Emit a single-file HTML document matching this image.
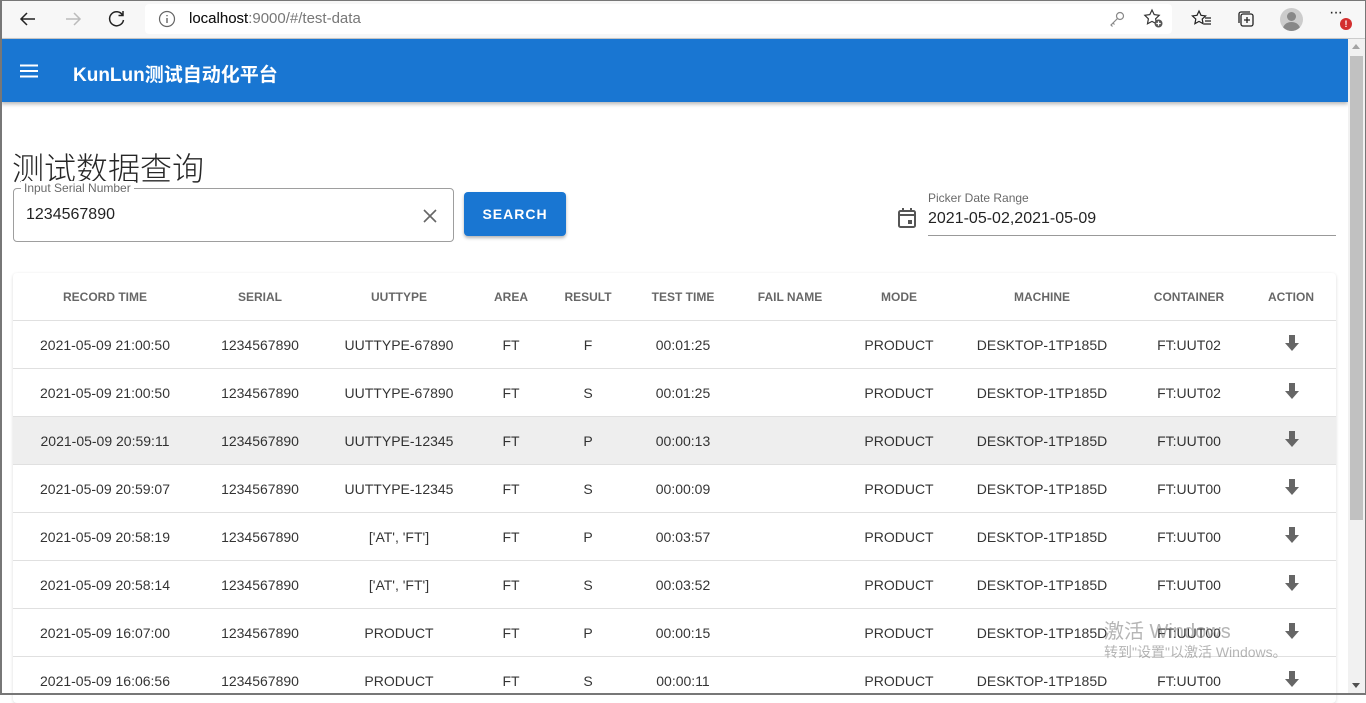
<!DOCTYPE html>
<html><head><meta charset="utf-8"><style>
*{margin:0;padding:0;box-sizing:border-box}
body{width:1366px;height:695px;overflow:hidden;background:#fff;font-family:"Liberation Sans","Noto Sans CJK SC",sans-serif;position:relative;color:rgba(0,0,0,.87)}
.abs{position:absolute}
#tb{left:0;top:0;width:1366px;height:39px;background:#f7f7f7;border-top:1px solid #777;border-left:1px solid #777;border-right:1px solid #777;border-bottom:1px solid #ccc}
#addr{left:145px;top:4px;width:1027px;height:30px;background:#fff;border-radius:4px}
#app{left:1px;top:39px;width:1347px;height:63px;background:#1976d2;box-shadow:0 2px 4px rgba(0,0,0,.3)}
.lb{left:0;top:0;width:2px;height:695px;background:#777}
.rb{left:1365px;top:0;width:1px;height:695px;background:#777}
.bb{left:0;top:693px;width:1366px;height:2px;background:#777}
#sb{left:1348px;top:39px;width:17px;height:654px;background:#f1f1f1}
#th{left:1350px;top:56px;width:13px;height:464px;background:#c1c1c1}
.hd{position:absolute;top:274px;height:47px;line-height:47px;font-size:12px;font-weight:bold;color:rgba(0,0,0,.6);transform:translateX(-50%);white-space:nowrap}
.c{position:absolute;font-size:14px;color:rgba(0,0,0,.8);transform:translateX(-50%);white-space:nowrap}
.rl{position:absolute;left:13px;width:1323px;height:1px;background:#e0e0e0}
.ar{position:absolute;width:16px;height:17px}
</style></head><body>
<div class="abs" id="tb"></div>
<div class="abs" id="addr"></div>
<svg class="abs" style="left:18px;top:9px" width="20" height="20" viewBox="0 0 20 20"><path d="M17 10H3M9 4L3 10l6 6" stroke="#222" stroke-width="1.5" fill="none"/></svg>
<svg class="abs" style="left:63px;top:9px" width="20" height="20" viewBox="0 0 20 20"><path d="M3 10h14M11 4l6 6-6 6" stroke="#bbb" stroke-width="1.5" fill="none"/></svg>
<svg class="abs" style="left:107px;top:8px" width="20" height="20" viewBox="0 0 20 20"><path d="M15.5 7A7 7 0 1 0 16.5 12M16 3v4.5h-4.5" stroke="#222" stroke-width="1.5" fill="none"/></svg>
<svg class="abs" style="left:158px;top:10px" width="18" height="18" viewBox="0 0 18 18"><circle cx="9" cy="9" r="7.5" stroke="#666" stroke-width="1.2" fill="none"/><path d="M9 8v5M9 5v1.3" stroke="#666" stroke-width="1.4"/></svg>
<div class="abs" style="left:189px;top:10px;font-size:15px;color:#777">localhost<span>:9000/#/test-data</span></div>
<div class="abs" style="left:189px;top:10px;font-size:15px;color:#111">localhost</div>
<svg class="abs" style="left:1108px;top:10px" width="18" height="18" viewBox="0 0 18 18"><circle cx="12" cy="6" r="3.5" stroke="#888" fill="none" stroke-width="1.2"/><path d="M9.5 8.5L3 15l1.5 1.5M5 13l1.5 1.5" stroke="#888" stroke-width="1.2" fill="none"/></svg>
<svg class="abs" style="left:1143px;top:8px" width="22" height="22" viewBox="0 0 22 22"><path d="M9 2l2.2 4.6 5 .7-3.6 3.5.9 5L9 13.4 4.5 15.8l.9-5L1.8 7.3l5-.7z" stroke="#333" fill="none" stroke-width="1.2"/><circle cx="15.5" cy="15.5" r="4" fill="#555"/><path d="M15.5 13.3v4.4M13.3 15.5h4.4" stroke="#fff" stroke-width="1.2"/></svg>
<svg class="abs" style="left:1191px;top:9px" width="22" height="20" viewBox="0 0 22 20"><path d="M8 2l2 4.3 4.6.6-3.4 3.2.9 4.6L8 12.4 3.9 14.7l.9-4.6L1.4 6.9 6 6.3z" stroke="#222" fill="none" stroke-width="1.2"/><path d="M14 9h6M14 12h6M13 15h7" stroke="#222" stroke-width="1.2"/></svg>
<svg class="abs" style="left:1236px;top:9px" width="22" height="22" viewBox="0 0 22 22"><rect x="5" y="5" width="12" height="12" rx="2" stroke="#222" fill="none" stroke-width="1.3"/><path d="M3 14V5a2 2 0 0 1 2-2h9M11 8v6M8 11h6" stroke="#222" stroke-width="1.3" fill="none"/></svg>
<div class="abs" style="left:1280px;top:8px;width:23px;height:23px;border-radius:50%;background:#ccc;overflow:hidden"><div class="abs" style="left:7px;top:4px;width:9px;height:9px;border-radius:50%;background:#888"></div><div class="abs" style="left:3px;top:14px;width:17px;height:14px;border-radius:50%;background:#888"></div></div>
<div class="abs" style="left:1329px;top:4px;font-size:16px;color:#222;letter-spacing:-1px">···</div>
<div class="abs" style="left:1340px;top:18px;width:12px;height:12px;border-radius:50%;background:#d32f2f;color:#fff;font-size:9px;font-weight:bold;text-align:center;line-height:12px">!</div>

<div class="abs" id="app"></div>
<svg class="abs" style="left:19px;top:64px" width="20" height="14" viewBox="0 0 20 14"><path d="M1 1.5h18M1 7h18M1 12.5h18" stroke="#fff" stroke-width="2"/></svg>
<div class="abs" style="left:73px;top:60px;font-size:19px;color:#fff;font-weight:bold">KunLun测试自动化平台</div>

<div class="abs" style="left:12px;top:144px;font-size:32px;color:rgba(0,0,0,.85);font-weight:300">测试数据查询</div>
<div class="abs" style="left:13px;top:188px;width:441px;height:54px;border:1px solid #9e9e9e;border-radius:4px"></div>
<div class="abs" style="left:21px;top:181px;background:#fff;padding:0 3px;font-size:12px;color:rgba(0,0,0,.6)">Input Serial Number</div>
<div class="abs" style="left:26px;top:206px;font-size:16px">1234567890</div>
<svg class="abs" style="left:422px;top:208px" width="16" height="16" viewBox="0 0 16 16"><path d="M2 2l12 12M14 2L2 14" stroke="#666" stroke-width="1.6"/></svg>
<div class="abs" style="left:464px;top:192px;width:102px;height:44px;background:#1976d2;border-radius:4px;box-shadow:0 2px 3px rgba(0,0,0,.3);color:#fff;font-size:14px;font-weight:bold;letter-spacing:1px;text-align:center;line-height:44px">SEARCH</div>

<svg class="abs" style="left:897px;top:207px" width="20" height="22" viewBox="0 0 20 22"><rect x="2" y="4" width="16" height="16" rx="1.5" fill="none" stroke="#555" stroke-width="2"/><path d="M2 8h16M6 1v4M14 1v4" stroke="#555" stroke-width="2"/><rect x="11" y="13" width="4" height="4" fill="#555"/></svg>
<div class="abs" style="left:928px;top:191px;font-size:12px;color:rgba(0,0,0,.6)">Picker Date Range</div>
<div class="abs" style="left:928px;top:210px;font-size:16px">2021-05-02,2021-05-09</div>
<div class="abs" style="left:928px;top:235px;width:408px;height:1px;background:#999"></div>

<div class="abs" style="left:13px;top:273px;width:1323px;height:430px;border-radius:4px;box-shadow:0 1px 3px rgba(0,0,0,.15)"></div>
<div class="abs" style="left:13px;top:416px;width:1323px;height:48px;background:#eee"></div>

<div class="hd" style="left:105px">RECORD TIME</div>
<div class="hd" style="left:260px">SERIAL</div>
<div class="hd" style="left:399px">UUTTYPE</div>
<div class="hd" style="left:511px">AREA</div>
<div class="hd" style="left:588px">RESULT</div>
<div class="hd" style="left:683px">TEST TIME</div>
<div class="hd" style="left:790px">FAIL NAME</div>
<div class="hd" style="left:899px">MODE</div>
<div class="hd" style="left:1042px">MACHINE</div>
<div class="hd" style="left:1189px">CONTAINER</div>
<div class="hd" style="left:1291px">ACTION</div>

<div class="rl" style="top:320px"></div><div class="rl" style="top:368px"></div><div class="rl" style="top:416px"></div><div class="rl" style="top:464px"></div><div class="rl" style="top:512px"></div><div class="rl" style="top:560px"></div><div class="rl" style="top:608px"></div><div class="rl" style="top:656px"></div>

<div id="rows"></div>
<script>
var d=[["2021-05-09 21:00:50","UUTTYPE-67890","F","00:01:25","FT:UUT02"],
["2021-05-09 21:00:50","UUTTYPE-67890","S","00:01:25","FT:UUT02"],
["2021-05-09 20:59:11","UUTTYPE-12345","P","00:00:13","FT:UUT00"],
["2021-05-09 20:59:07","UUTTYPE-12345","S","00:00:09","FT:UUT00"],
["2021-05-09 20:58:19","['AT', 'FT']","P","00:03:57","FT:UUT00"],
["2021-05-09 20:58:14","['AT', 'FT']","S","00:03:52","FT:UUT00"],
["2021-05-09 16:07:00","PRODUCT","P","00:00:15","FT:UUT00"],
["2021-05-09 16:06:56","PRODUCT","S","00:00:11","FT:UUT00"]];
var h="";
d.forEach(function(r,i){var t=337+i*48;
function c(x,s){h+='<div class="c" style="left:'+x+'px;top:'+t+'px">'+s+'</div>';}
c(105,r[0]);c(260,"1234567890");c(399,r[1]);c(511,"FT");c(588,r[2]);c(683,r[3]);c(899,"PRODUCT");c(1042,"DESKTOP-1TP185D");c(1189,r[4]);
h+='<svg class="ar" style="left:1284px;top:'+(t-2)+'px" viewBox="0 0 16 17"><path d="M5 0h6v8h4l-7 8-7-8h4z" fill="#666"/></svg>';});
document.getElementById("rows").innerHTML=h;
</script>
<div class="abs" style="left:1104px;top:615px;font-size:20px;color:rgba(120,120,120,.55)">激活 Windows</div>
<div class="abs" style="left:1104px;top:642px;font-size:14px;color:rgba(120,120,120,.55)">转到"设置"以激活 Windows。</div>

<div class="abs" id="sb"></div>
<div class="abs" id="th"></div>
<div class="abs" style="left:1352px;top:44px;width:0;height:0;border-left:4.5px solid transparent;border-right:4.5px solid transparent;border-bottom:5px solid #a3a3a3"></div>
<div class="abs" style="left:1352px;top:683px;width:0;height:0;border-left:4.5px solid transparent;border-right:4.5px solid transparent;border-top:5px solid #505050"></div>
<div class="abs lb"></div><div class="abs rb"></div><div class="abs bb"></div>
</body></html>
